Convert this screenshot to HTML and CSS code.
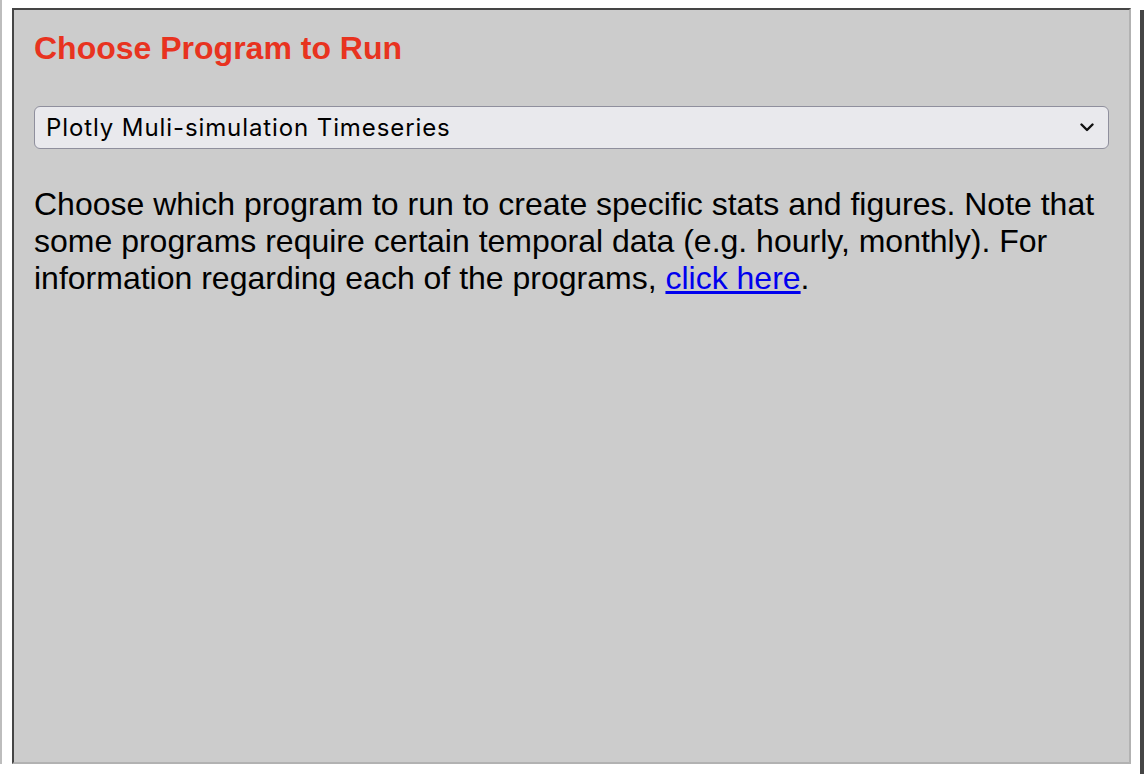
FILE: index.html
```html
<html>

	<head>
		<title> Choose Program </title>

		<link rel="stylesheet" href="styles.css">
	</head>

	<body>

		<div class="edge-left"></div>

		<div class="panel">
			<h3 class="panel-title">Choose Program to Run</h3>

			<div class="select-wrap">
				<select class="program-select">
					<option>Plotly Muli-simulation Timeseries</option>
				</select>
				<svg class="select-arrow" width="14" height="9" viewBox="0 0 14 9">
					<path d="M1.5 1.5 L7 7 L12.5 1.5" fill="none" stroke="#111" stroke-width="2.4" stroke-linecap="round" stroke-linejoin="round"/>
				</svg>
			</div>

			<p class="panel-text">
				Choose which program to run to create specific stats and figures. Note that
				some programs require certain temporal data (e.g. hourly, monthly). For
				information regarding each of the programs, <a href="#">click here</a>.
			</p>
		</div>

		<div class="edge-right"></div>

	</body>

</html>
```

FILE: styles.css
```css
* {
	margin: 0;
	padding: 0;
}

body {
	display: flex;
	align-items: flex-start;
	background: white;
	font-family: "Liberation Sans", Arial, sans-serif;
	height: 774px;
	overflow: hidden;
}

.edge-left {
	width: 2px;
	height: 764px;
	background-color: #bdbdbd;
	margin-right: 10px;
}

.panel {
	box-sizing: border-box;
	width: 1119px;
	height: 756px;
	margin-top: 8px;
	padding: 20px 20px;
	background-color: #cccccc;
	border-style: solid;
	border-width: 2px;
	border-color: #454545 #b2b2b2 #b2b2b2 #454545;
}

.panel-title {
	font-size: 32px;
	font-weight: bold;
	color: #e8331f;
}

.select-wrap {
	position: relative;
	margin-top: 39px;
}

.program-select {
	-webkit-appearance: none;
	appearance: none;
	display: block;
	width: 100%;
	height: 43px;
	padding: 0 40px 0 11px;
	font-family: Inter, "Liberation Sans", sans-serif;
	font-size: 24px;
	letter-spacing: 0.9px;
	color: #000;
	background-color: #e9e9ed;
	border: 1.5px solid #8f8f9d;
	border-radius: 6px;
}

.select-arrow {
	position: absolute;
	right: 15px;
	top: 17px;
}

.panel-text {
	margin-top: 37px;
	font-size: 32px;
	line-height: 37px;
	color: #000;
}

.panel-text a {
	color: #0000ee;
}

.edge-right {
	width: 4px;
	height: 764px;
	margin-top: 10px;
	margin-left: 9px;
	background-color: #454545;
}
```
